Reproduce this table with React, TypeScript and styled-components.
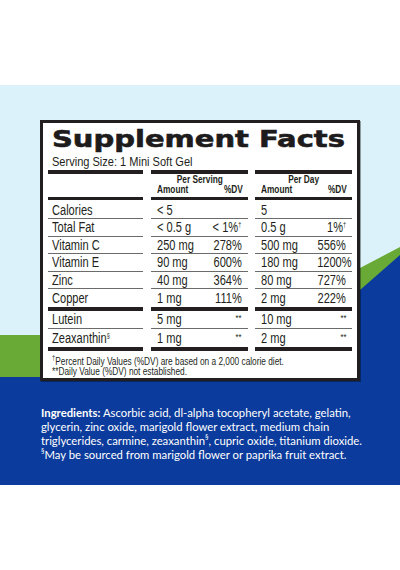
import React from "react";
import styled, { createGlobalStyle } from "styled-components";

const GlobalStyle = createGlobalStyle`
  html, body { margin: 0; padding: 0; background: #ffffff; }
  * { box-sizing: border-box; }
`;

const NARROW = `"Liberation Sans", Arial, sans-serif`;

const Page = styled.div`
  position: relative;
  width: 400px;
  height: 570px;
  overflow: hidden;
  background: #ffffff;
`;

const Backdrop = styled.svg`
  position: absolute;
  inset: 0;
  z-index: 0;
  display: block;
`;

const Content = styled.div`
  position: relative;
  z-index: 1;
  display: flex;
  flex-direction: column;
  padding-top: 120px;
`;

const Card = styled.section`
  margin: 0 40px 0 40px;
  border: 3px solid #231f20;
  background: #ffffff;
  box-shadow: 1px 1px 0 rgba(0, 0, 0, 0.35);
  padding: 4px 5px 1px 5px;
  color: #231f20;
`;

/* condensed text: Helvetica Condensed look from Liberation Sans */
const Txt = styled.span<{ $o?: "left" | "right" | "center"; $s?: number }>`
  display: inline-block;
  white-space: nowrap;
  transform: scaleX(${(p) => p.$s ?? 0.83});
  transform-origin: ${(p) => p.$o ?? "left"} center;
`;

const TitleRow = styled.div`
  padding-left: 4px;
  height: 27px;
  overflow: visible;
`;

const Title = styled.h1`
  display: inline-block;
  margin: 0;
  font-family: "DejaVu Sans", sans-serif;
  font-weight: 700;
  font-size: 23px;
  line-height: 24px;
  white-space: nowrap;
  color: #1d1b1c;
  -webkit-text-stroke: 0.6px #1d1b1c;
  transform: scaleX(1.26);
  transform-origin: left center;
`;

const Serving = styled.div`
  padding-left: 4px;
  font-family: ${NARROW};
  font-size: 13.3px;
  line-height: 15px;
  margin-bottom: 1px;
`;

const Grid = styled.div`
  display: grid;
  grid-template-columns: 95px 97px 97px;
  column-gap: 7.5px;
  font-family: ${NARROW};
`;

const Bar = styled.div<{ $h: number }>`
  height: ${(p) => p.$h}px;
  background: #231f20;
`;

const HeadCell = styled.div`
  display: flex;
  flex-direction: column;
  padding: 1px 5px 1px 6px;
  font-weight: 700;
  font-size: 10px;
  line-height: 10px;
  height: 23px;
`;

const HeadTitle = styled.div`
  text-align: center;
`;

const HeadSub = styled.div`
  display: flex;
  justify-content: space-between;
`;

const Cell = styled.div<{ $line: boolean; $h: number; $top?: number }>`
  display: flex;
  align-items: center;
  justify-content: space-between;
  height: ${(p) => p.$h}px;
  padding: ${(p) => p.$top ?? 0}px 6px 0 6px;
  border-bottom: ${(p) => (p.$line ? "1px solid #6b6b6b" : "0")};
  font-size: 14px;
  line-height: 14px;
  white-space: nowrap;
`;

const LabelCell = styled(Cell)`
  padding-left: 4px;
`;

const Sup = styled.sup`
  font-size: 7px;
  line-height: 0;
  vertical-align: 5px;
`;

const Stars = styled.span`
  font-size: 9.5px;
  line-height: 0;
  position: relative;
  top: -3px;
`;

const Footnotes = styled.div`
  padding: 6px 0 0 4px;
  font-family: ${NARROW};
  font-size: 10px;
  line-height: 10px;
`;

const Ingredients = styled.p`
  margin: 25px 36px 0 41px;
  font-family: Lato, "Open Sans", sans-serif;
  font-size: 11.3px;
  line-height: 14px;
  color: #ffffff;
  white-space: nowrap;
`;

const Strong = styled.b`
  font-weight: 700;
`;

type Row = { name: React.ReactNode; a1: string; d1: React.ReactNode; a2: string; d2: React.ReactNode };

const dag = <Sup>†</Sup>;
const stars = <Stars>**</Stars>;

const group1: Row[] = [
  { name: "Calories", a1: "< 5", d1: "", a2: "5", d2: "" },
  { name: "Total Fat", a1: "< 0.5 g", d1: <>&lt; 1%{dag}</>, a2: "0.5 g", d2: <>1%{dag}</> },
  { name: "Vitamin C", a1: "250 mg", d1: "278%", a2: "500 mg", d2: "556%" },
  { name: "Vitamin E", a1: "90 mg", d1: "600%", a2: "180 mg", d2: "1200%" },
  { name: "Zinc", a1: "40 mg", d1: "364%", a2: "80 mg", d2: "727%" },
  { name: "Copper", a1: "1 mg", d1: "111%", a2: "2 mg", d2: "222%" },
];

const group2: Row[] = [
  { name: "Lutein", a1: "5 mg", d1: stars, a2: "10 mg", d2: stars },
  { name: <>Zeaxanthin<Sup>§</Sup></>, a1: "1 mg", d1: stars, a2: "2 mg", d2: stars },
];

const BarRow = ({ h }: { h: number }) => (
  <>
    <Bar $h={h} />
    <Bar $h={h} />
    <Bar $h={h} />
  </>
);

const ROW_SCALE = 0.79;

const Rows = ({ rows, rowH, firstH }: { rows: Row[]; rowH: number; firstH?: number }) => (
  <>
    {rows.map((r, i) => {
      const line = i < rows.length - 1;
      const h = i === 0 && firstH ? firstH : rowH;
      const top = i === 0 && firstH ? firstH - rowH : 0;
      return (
        <React.Fragment key={i}>
          <LabelCell $line={line} $h={h} $top={top}>
            <Txt $s={ROW_SCALE}>{r.name}</Txt>
          </LabelCell>
          <Cell $line={line} $h={h} $top={top}>
            <Txt $s={ROW_SCALE}>{r.a1}</Txt>
            <Txt $s={ROW_SCALE} $o="right">{r.d1}</Txt>
          </Cell>
          <Cell $line={line} $h={h} $top={top}>
            <Txt $s={ROW_SCALE}>{r.a2}</Txt>
            <Txt $s={ROW_SCALE} $o="right">{r.d2}</Txt>
          </Cell>
        </React.Fragment>
      );
    })}
  </>
);

const Head = ({ title }: { title: string }) => (
  <HeadCell>
    <HeadTitle>
      <Txt $o="center">{title}</Txt>
    </HeadTitle>
    <HeadSub>
      <Txt>Amount</Txt>
      <Txt $o="right">%DV</Txt>
    </HeadSub>
  </HeadCell>
);

export default function App() {
  return (
    <>
      <GlobalStyle />
      <Page>
        <Backdrop width="400" height="570" viewBox="0 0 400 570">
          <rect x="0" y="0" width="400" height="570" fill="#ffffff" />
          <rect x="0" y="85" width="400" height="400" fill="#dcf2fa" />
          <path d="M0 335 L40 335 L360 268 L400 247 L400 485 L0 485 Z" fill="#69a936" />
          <path d="M0 377 L40 377 L360 290 L400 255 L400 485 L0 485 Z" fill="#0b3b9c" />
        </Backdrop>
        <Content>
          <Card>
            <TitleRow>
              <Title>Supplement Facts</Title>
            </TitleRow>
            <Serving>
              <Txt>Serving Size: 1 Mini Soft Gel</Txt>
            </Serving>
            <Grid>
              <BarRow h={4} />
              <HeadCell />
              <Head title="Per Serving" />
              <Head title="Per Day" />
              <BarRow h={3} />
              <Rows rows={group1} rowH={17.5} firstH={19} />
              <BarRow h={4} />
              <Rows rows={group2} rowH={18} />
              <BarRow h={4.5} />
            </Grid>
            <Footnotes>
              <div>
                <Txt>
                  <Sup>†</Sup>Percent Daily Values (%DV) are based on a 2,000 calorie diet.
                </Txt>
              </div>
              <div>
                <Txt>**Daily Value (%DV) not established.</Txt>
              </div>
            </Footnotes>
          </Card>
          <Ingredients>
            <Strong>Ingredients:</Strong> Ascorbic acid, dl-alpha tocopheryl acetate, gelatin,
            <br />
            glycerin, zinc oxide, marigold flower extract, medium chain
            <br />
            triglycerides, carmine, zeaxanthin<Sup>§</Sup>, cupric oxide, titanium dioxide.
            <br />
            <Sup>§</Sup>May be sourced from marigold flower or paprika fruit extract.
          </Ingredients>
        </Content>
      </Page>
    </>
  );
}
